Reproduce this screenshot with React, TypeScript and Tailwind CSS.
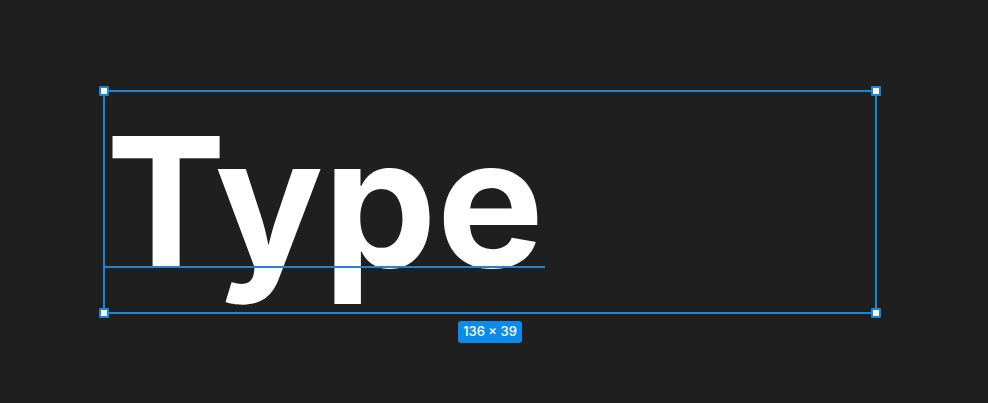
function Handle({ cls }: { cls: string }) {
  return (
    <div className={"absolute w-[10px] h-[10px] bg-[#1a86d8] p-[2px] rounded-[1px] " + cls}>
      <div className="w-full h-full bg-white" />
    </div>
  );
}

export default function App() {
  return (
    <div
      className="w-[988px] h-[403px] bg-[#1f1f1f] overflow-hidden pl-[103px] pt-[90px] flex flex-col items-start"
      style={{ fontFamily: "Inter, 'Noto Sans', sans-serif" }}
    >
      <div className="flex flex-col items-center">
        <div className="relative w-[774px] h-[224px] border-2 border-solid border-[#1a86d8] pt-[20px] pl-[1px]">
          <div className="text-white font-bold leading-none text-[180px]">Type</div>
          <div className="absolute left-0 top-[174px] w-[440px] h-[2px] bg-[#1a86d8]" />
          <Handle cls="-left-[6px] -top-[6px]" />
          <Handle cls="-right-[6px] -top-[6px]" />
          <Handle cls="-left-[6px] -bottom-[6px]" />
          <Handle cls="-right-[6px] -bottom-[6px]" />
        </div>
        <div className="mt-[7px] h-[22px] px-[5px] rounded-[3px] bg-[#0d8bea] text-white text-[13px] font-medium flex items-center">
          136 × 39
        </div>
      </div>
    </div>
  );
}
